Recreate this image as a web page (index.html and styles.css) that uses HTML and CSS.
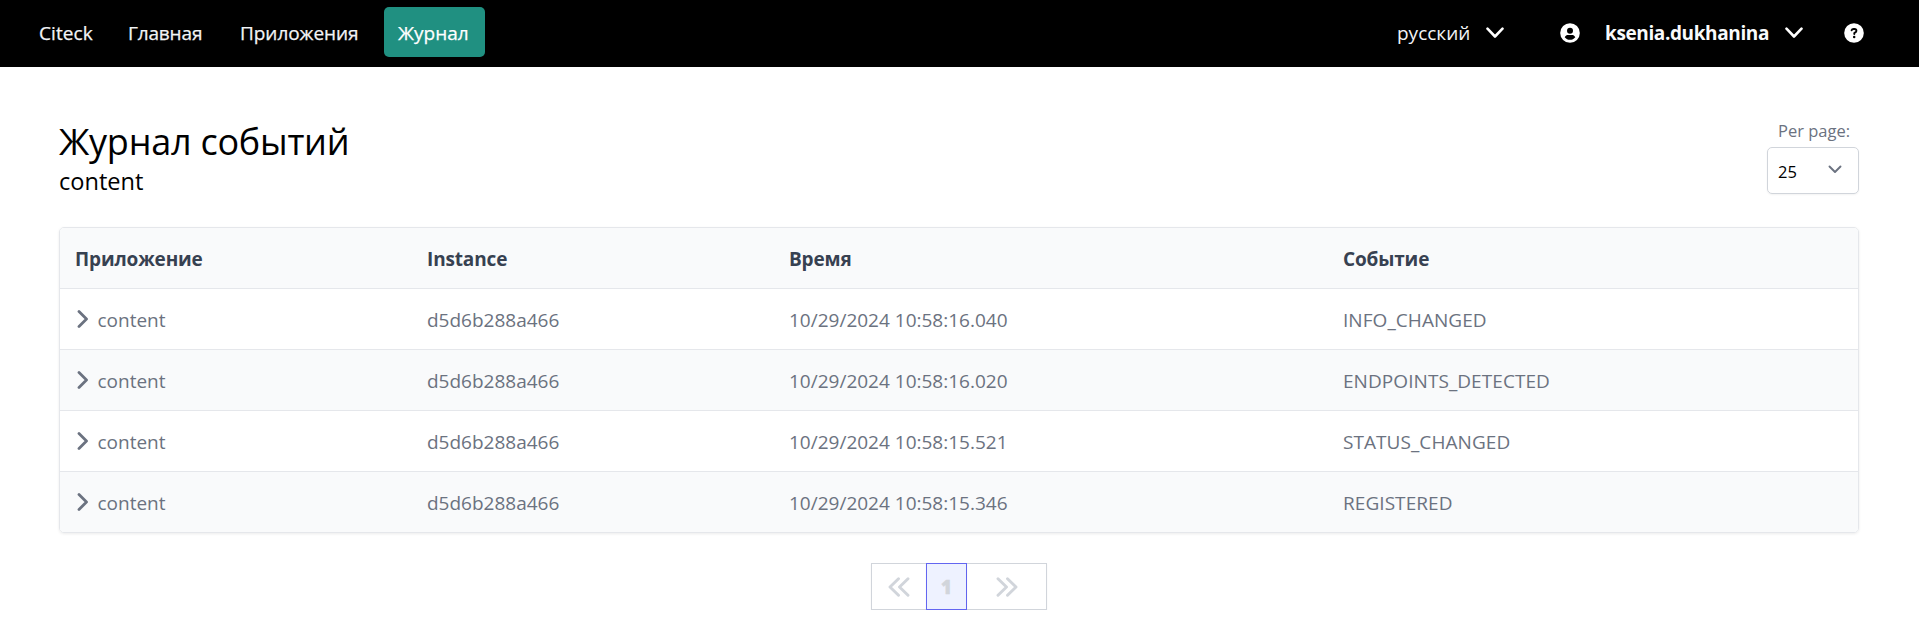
FILE: index.html
```html
<!DOCTYPE html>
<html lang="ru">
<head>
<meta charset="utf-8">
<title>Журнал событий</title>
<link rel="stylesheet" href="styles.css">
</head>
<body>
<header class="navbar">
  <nav class="menu">
    <a class="brand"><span class="t">Citeck</span></a>
    <a class="item home"><span class="t">Главная</span></a>
    <a class="item apps"><span class="t">Приложения</span></a>
    <a class="item journal active"><span class="t">Журнал</span></a>
  </nav>
  <div class="tools">
    <div class="lang"><span class="t">русский</span>
      <svg class="chev" viewBox="0 0 18 12"><path d="M1.500 1.700 9 9.500l7.500-7.800"/></svg></div>
    <div class="user">
      <svg class="disc" viewBox="0 0 20 20"><circle cx="10" cy="10" r="9.800" fill="#fff"/><circle cx="10" cy="7.700" r="3" fill="#000"/><path d="M4.700 14.200C5.500 12.600 6.700 12 8 12h4c1.300 0 2.500.6 3.300 2.200C14 15.900 12.100 16.800 10 16.800s-4-.9-5.300-2.600z" fill="#000"/></svg>
      <span class="t name">ksenia.dukhanina</span>
      <svg class="chev" viewBox="0 0 18 12"><path d="M1.500 1.700 9 9.500l7.500-7.800"/></svg></div>
    <svg class="disc" viewBox="0 0 20 20"><circle cx="10" cy="10" r="9.800" fill="#fff"/><path d="M7.600 7.300c.3-1 1-1.300 2-1.300h.9c1.100 0 1.900.7 1.900 1.700 0 .8-.4 1.300-1.100 1.700l-1 .6v1.100" fill="none" stroke="#000" stroke-width="1.900" stroke-linecap="round"/><circle cx="10.200" cy="13.900" r="1.250" fill="#000"/></svg>
  </div>
</header>
<main class="page">
  <div class="head">
    <div class="titles">
      <h1><span class="t">Журнал событий</span></h1>
      <h2><span class="t">content</span></h2>
    </div>
    <div class="paging">
      <label class="t">Per page:</label>
      <div class="select"><span class="t">25</span>
        <svg viewBox="0 0 14 9"><path d="M1.500 1.500 7 7l5.500-5.500"/></svg></div>
    </div>
  </div>
  <div class="table">
    <div class="row header"><b class="t">Приложение</b><b class="t">Instance</b><b class="t">Время</b><b class="t">Событие</b></div>
    <div class="row"><span class="app"><svg viewBox="0 0 12 18"><path d="M2 1.500 9.500 9 2 16.500"/></svg><span class="t">content</span></span><span class="t">d5d6b288a466</span><span class="t">10/29/2024 10:58:16.040</span><span class="t event">INFO_CHANGED</span></div>
    <div class="row alt"><span class="app"><svg viewBox="0 0 12 18"><path d="M2 1.500 9.500 9 2 16.500"/></svg><span class="t">content</span></span><span class="t">d5d6b288a466</span><span class="t">10/29/2024 10:58:16.020</span><span class="t event">ENDPOINTS_DETECTED</span></div>
    <div class="row"><span class="app"><svg viewBox="0 0 12 18"><path d="M2 1.500 9.500 9 2 16.500"/></svg><span class="t">content</span></span><span class="t">d5d6b288a466</span><span class="t">10/29/2024 10:58:15.521</span><span class="t event">STATUS_CHANGED</span></div>
    <div class="row alt"><span class="app"><svg viewBox="0 0 12 18"><path d="M2 1.500 9.500 9 2 16.500"/></svg><span class="t">content</span></span><span class="t">d5d6b288a466</span><span class="t">10/29/2024 10:58:15.346</span><span class="t event">REGISTERED</span></div>
  </div>
  <div class="pager">
    <span class="pg first"><svg viewBox="0 0 22 20"><path d="M10.500 1.700 2 10l8.500 8.300M20 1.700 11.500 10l8.500 8.300"/></svg></span>
    <span class="pg current">1</span>
    <span class="pg last"><svg viewBox="0 0 22 20"><path d="M2 1.700 10.500 10 2 18.300M11.500 1.700 20 10l-8.500 8.300"/></svg></span>
  </div>
</main>
</body>
</html>
```
FILE: styles.css
```css
* { box-sizing: border-box; }
body { margin: 0; background: #fff; color: #000; font: 19px/28px "Open Sans", "Noto Sans", sans-serif; }
.t { white-space: nowrap; }
svg { display: block; flex: none; fill: none; stroke-linecap: round; stroke-linejoin: round; }
.navbar { height: 67px; background: #000; color: #f3f4f6; display: flex; justify-content: space-between; padding: 7px 55px 0 39px; font-weight: 500; }
.menu { display: flex; height: 50px; align-items: center; -webkit-text-stroke: .25px currentColor; }
.menu .t { padding-top: 2px; }
.brand { width: 75px; padding-top: 2px; letter-spacing: .1px; }
.item { height: 50px; display: flex; align-items: center; padding-left: 14px; border-radius: 5px; }
.home { width: 112px; letter-spacing: -.15px; }
.apps { width: 158px; letter-spacing: -.05px; }
.journal { width: 101px; }
.active { background: #209081; color: #fff; }
.tools { display: flex; height: 52px; align-items: center; }
.lang { display: flex; align-items: center; gap: 15px; margin-right: 56px; }
.lang .t { width: 74px; }
.user { display: flex; align-items: center; margin-right: 41px; }
.name { width: 165px; margin: 0 15px 0 25px; font-weight: 700; color: #f9fafb; letter-spacing: -.38px; }
.disc { width: 20px; height: 20px; }
.chev { width: 18px; height: 12px; stroke: #fff; stroke-width: 2.600; }
.page { padding: 50px 60px 0 59px; }
.head { display: flex; justify-content: space-between; height: 110px; }
h1, h2 { margin: 0; font-weight: 400; }
h1 { font-size: 36px; line-height: 46px; height: 48px; padding-top: 2px; letter-spacing: -.24px; }
h2 { font-size: 23.600px; line-height: 32px; }
.paging { width: 92px; font-size: 16.500px; }
.paging label { display: block; color: #6b7280; padding-left: 11px; height: 30px; }
.select { height: 47px; border: 1px solid #d1d5db; border-radius: 5px; display: flex; align-items: center; justify-content: space-between; padding: 0 16px 0 10px; box-shadow: 0 1px 2px rgba(0,0,0,.05); }
.select .t { padding-top: 2px; }
.select svg { width: 14px; height: 9px; stroke: #6b7280; stroke-width: 1.900; margin-top: -2px; }
.table { border: 1px solid #e5e7eb; border-radius: 5px; overflow: hidden; box-shadow: 0 1px 3px rgba(0,0,0,.08); }
.row { display: grid; grid-template-columns: 352px 362px 554px 1fr; height: 61px; align-items: center; padding: 1px 0 0 15px; border-top: 1px solid #e5e7eb; color: #6b7280; }
.header { height: 60px; background: #f9fafb; color: #374151; border-top: 0; letter-spacing: -.15px; }
.alt { background: #f9fafb; }
.app { display: flex; align-items: center; gap: 9px; padding-left: 1.500px; }
.app svg { width: 12px; height: 18px; stroke: #6b7280; stroke-width: 2.800; margin-top: -1px; }
.event { letter-spacing: .06px; }
.pager { display: flex; justify-content: center; margin-top: 30px; }
.pg { height: 47px; border: 1px solid #d1d5db; display: flex; align-items: center; justify-content: center; color: #d1d5db; box-shadow: 0 1px 2px rgba(0,0,0,.04); }
.pg svg { width: 22px; height: 20px; stroke: #d1d5db; stroke-width: 2.900; }
.first { width: 55px; border-right: 0; }
.current { width: 41px; border-color: #6366f1; background: #eef2ff; font-weight: 800; font-size: 18.500px; padding-top: 1px; -webkit-text-stroke: .5px #d1d5db; }
.last { width: 80px; border-left: 0; }
```
